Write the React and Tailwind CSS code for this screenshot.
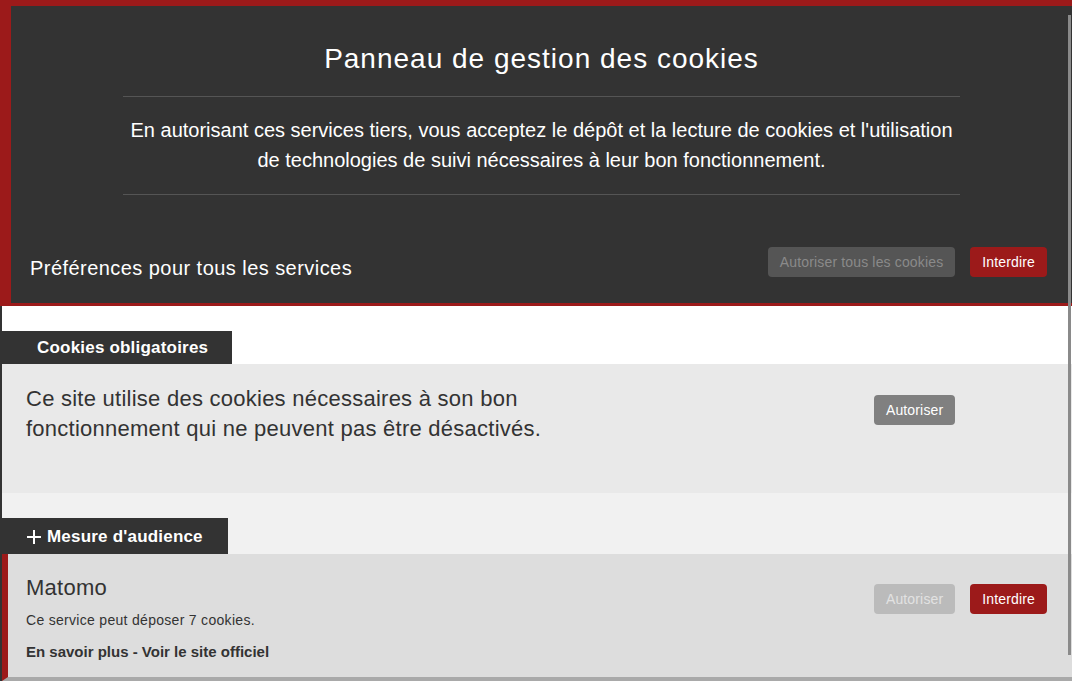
import React from 'react';

const RED = 'bg-[#9c1a1a]';

function Btn({ children, className }) {
  return (
    <button className={`h-[30px] px-3 rounded-[4px] text-[14px] leading-none tracking-[0.15px] ${className}`}>
      {children}
    </button>
  );
}

export default function App() {
  return (
    <div className="relative w-[1072px] h-[681px] overflow-hidden bg-white font-['Liberation_Sans',Arial,sans-serif]">
      {/* Header panel */}
      <div className="bg-[#333333] border-t-[6px] border-l-[11px] border-b-[3px] border-[#9c1a1a] text-white">
        <div className="pt-[35px]">
          <h1 className="text-[28px] leading-[36px] tracking-[1px] text-center">Panneau de gestion des cookies</h1>
          <div className="w-[837px] mx-auto mt-[19px] border-t border-[#555555]" />
          <p className="w-[837px] mx-auto mt-[18px] text-[20px] leading-[30px] text-center">
            En autorisant ces services tiers, vous acceptez le dépôt et la lecture de cookies et l'utilisation de technologies de suivi nécessaires à leur bon fonctionnement.
          </p>
          <div className="w-[837px] mx-auto mt-[19px] border-t border-[#555555]" />
        </div>
        <div className="flex items-start justify-between pl-[19px] pr-[25px] mt-[52px] pb-[23px]">
          <span className="text-[20px] leading-[24px] tracking-[0.45px] mt-[9px]">Préférences pour tous les services</span>
          <div className="flex gap-[15px]">
            <Btn className="bg-[#555555] text-[#8a8a8a]">Autoriser tous les cookies</Btn>
            <Btn className={`${RED} text-white`}>Interdire</Btn>
          </div>
        </div>
      </div>

      {/* Services list */}
      <div className="border-l-2 border-[#333333]">
        <div className="h-[25px] bg-white" />
        <div className="-ml-[2px] w-[232px] h-[33px] bg-[#333333] text-white font-bold text-[17px] tracking-[0.2px] leading-[33px] pl-[37px]">
          Cookies obligatoires
        </div>
        <div className="h-[129px] bg-[#e9e9e9] flex justify-between pl-[24px] pr-[25px]">
          <p className="w-[560px] pt-[20px] text-[22px] leading-[30px] tracking-[0.25px] text-[#333333]">
            Ce site utilise des cookies nécessaires à son bon fonctionnement qui ne peuvent pas être désactivés.
          </p>
          <div className="flex gap-[15px] pt-[31px]">
            <Btn className="bg-[#808080] text-white">Autoriser</Btn>
            <Btn className="invisible">Interdire</Btn>
          </div>
        </div>

        <div className="h-[25px] bg-[#f1f1f1]" />
        <div className="bg-[#f1f1f1]">
          <div className="-ml-[2px] w-[228px] h-[36px] pt-[2px] bg-[#333333] text-white font-bold text-[17px] tracking-[0.2px] pl-[27px] flex items-center gap-[6px]">
            <span className="relative w-[14px] h-[14px]">
              <span className="absolute left-0 top-[6px] w-[14px] h-[2px] bg-white" />
              <span className="absolute left-[6px] top-0 w-[2px] h-[14px] bg-white" />
            </span>
            Mesure d'audience
          </div>
        </div>
        <div className="h-[127px] bg-[#dddddd] border-l-[6px] border-[#9c1a1a] border-b-4 border-b-[#a9a9a9] flex justify-between pl-[18px] pr-[25px]">
          <div className="text-[#333333]">
            <div className="pt-[21px] text-[22px] leading-[26px] tracking-[0.25px]">Matomo</div>
            <div className="mt-[11px] text-[14px] leading-[16px] tracking-[0.3px]">Ce service peut déposer 7 cookies.</div>
            <div className="mt-[15px] text-[15px] leading-[18px] font-bold">En savoir plus - Voir le site officiel</div>
          </div>
          <div className="flex gap-[15px] pt-[30px]">
            <Btn className="bg-[#bbbbbb] text-[#e2e2e2]">Autoriser</Btn>
            <Btn className={`${RED} text-white`}>Interdire</Btn>
          </div>
        </div>
      </div>

      {/* scrollbar thumb */}
      <div className="absolute left-[1068px] top-[15px] w-[3px] h-[640px] bg-[#8a8a8a]" />
    </div>
  );
}
